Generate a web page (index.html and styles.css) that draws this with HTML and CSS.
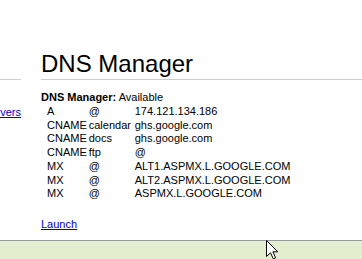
FILE: index.html
```html
<!DOCTYPE html>
<html lang="en">
<head>
    <meta charset="UTF-8">
    <meta name="viewport" content="width=device-width, initial-scale=1.0">
    <title>DNS Manager</title>
    <link rel="stylesheet" href="styles.css">
</head>
<body>
    <div class="page">
        <!-- left column, mostly scrolled out of view -->
        <div class="sidebar">
            <div class="side-head"></div>
            <div class="side-links">
                <a href="#">Name servers</a>
            </div>
        </div>

        <div class="main">
            <h2 class="title">DNS Manager</h2>
            <div class="status"><b>DNS Manager:</b> Available</div>
            <table class="records">
                <tr><td>A</td><td>@</td><td>174.121.134.186</td></tr>
                <tr><td>CNAME</td><td>calendar</td><td>ghs.google.com</td></tr>
                <tr><td>CNAME</td><td>docs</td><td>ghs.google.com</td></tr>
                <tr><td>CNAME</td><td>ftp</td><td>@</td></tr>
                <tr><td>MX</td><td>@</td><td>ALT1.ASPMX.L.GOOGLE.COM</td></tr>
                <tr><td>MX</td><td>@</td><td>ALT2.ASPMX.L.GOOGLE.COM</td></tr>
                <tr><td>MX</td><td>@</td><td>ASPMX.L.GOOGLE.COM</td></tr>
            </table>
            <div class="launch"><a href="#">Launch</a></div>
        </div>
    </div>
    <div class="band"></div>

    <!-- mouse pointer caught in the screenshot -->
    <svg class="cursor" width="13" height="20" viewBox="0 0 13 20">
        <path d="M0.5 0.5 L0.5 16.5 L4.5 12.8 L7.3 18.8 L9.6 17.8 L6.9 11.8 L11.8 11.8 Z" fill="#fff" stroke="#000" stroke-width="1"/>
    </svg>
</body>
</html>
```

FILE: styles.css
```css
html, body {
    height: 100%;
}
body {
    margin: 0;
    font-family: Arial, "Liberation Sans", sans-serif;
    font-size: 11px;
    color: #000;
    background: #fff;
    display: flex;
    flex-direction: column;
}
a {
    color: #00c;
}
.page {
    flex: 1;
    display: flex;
    gap: 20px;
    padding-top: 50px;
}
.sidebar {
    width: 21px;
    flex: none;
    overflow: hidden;
}
.side-head {
    height: 29px;
    border-bottom: 1px solid #ccc;
}
.side-links {
    display: flex;
    justify-content: flex-end;
    white-space: nowrap;
    margin-top: 25px;
    line-height: 14px;
}
.main {
    flex: 1;
    min-width: 0;
}
.title {
    margin: 0;
    font-size: 24px;
    font-weight: normal;
    line-height: 28px;
    padding-bottom: 1px;
    border-bottom: 1px solid #ccc;
}
.status {
    margin-top: 10px;
    line-height: 14px;
}
.records {
    margin: 1px 0 0 6px;
    border-collapse: collapse;
}
.records td {
    padding: 0 2px 0 0;
    line-height: 13.7px;
    white-space: nowrap;
    vertical-align: top;
}
.records td:nth-child(1) {
    min-width: 36px;
}
.records td:nth-child(2) {
    min-width: 44px;
}
.launch {
    margin-top: 16px;
    line-height: 14px;
}
.band {
    height: 18px;
    border-top: 1px solid #999;
    background: #e3eed0;
}
.cursor {
    position: absolute;
    left: 266px;
    top: 240px;
}
```
